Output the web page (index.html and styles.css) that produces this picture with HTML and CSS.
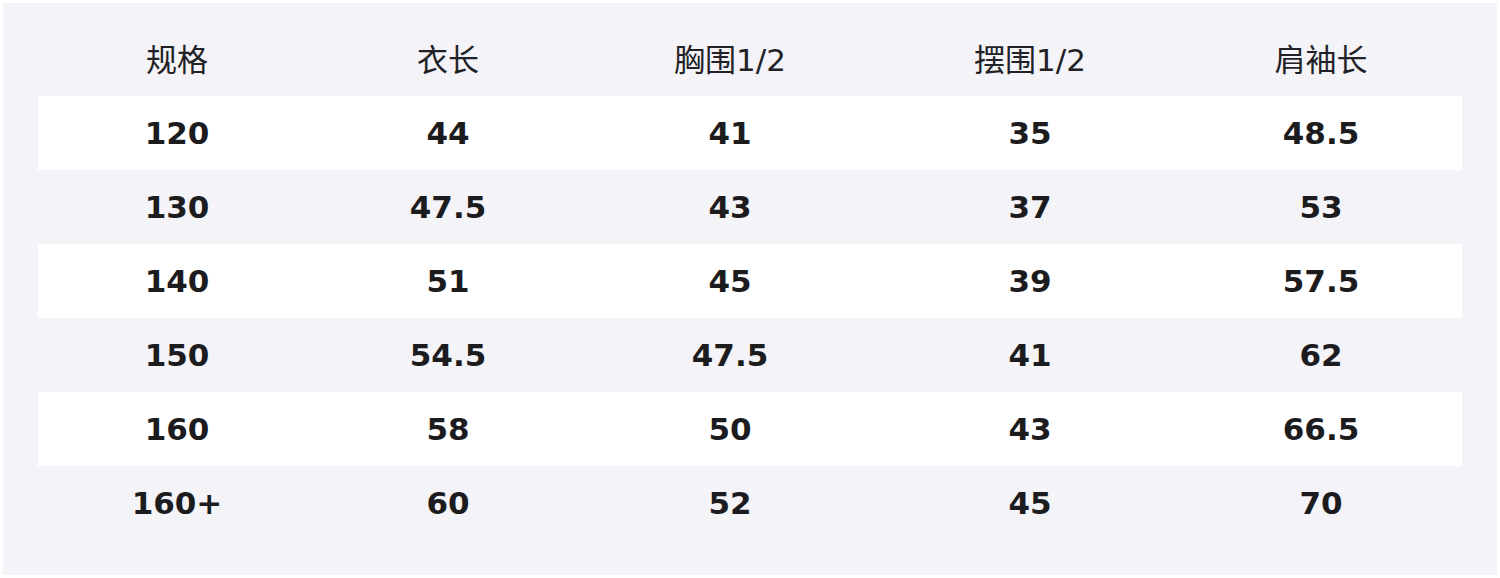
FILE: index.html
```html
<!DOCTYPE html>
<html lang="zh">
<head>
<meta charset="utf-8">
<link rel="stylesheet" href="styles.css">
</head>
<body>
<div class="panel">
  <div class="table">
    <div class="row head"><div>规格</div><div>衣长</div><div>胸围1/2</div><div>摆围1/2</div><div>肩袖长</div></div>
    <div class="row alt"><div>120</div><div>44</div><div>41</div><div>35</div><div>48.5</div></div>
    <div class="row"><div>130</div><div>47.5</div><div>43</div><div>37</div><div>53</div></div>
    <div class="row alt"><div>140</div><div>51</div><div>45</div><div>39</div><div>57.5</div></div>
    <div class="row"><div>150</div><div>54.5</div><div>47.5</div><div>41</div><div>62</div></div>
    <div class="row alt"><div>160</div><div>58</div><div>50</div><div>43</div><div>66.5</div></div>
    <div class="row"><div>160+</div><div>60</div><div>52</div><div>45</div><div>70</div></div>
  </div>
</div>
</body>
</html>
```
FILE: styles.css
```css
html, body {
  margin: 0;
  padding: 0;
  background: #ffffff;
}
body {
  padding: 3px;
  width: 1494px;
  height: 572px;
}
.panel {
  background: #f3f3f8;
  height: 100%;
  padding: 19px 35px 0 35px;
  box-sizing: border-box;
  font-family: "DejaVu Sans", "Noto Sans CJK SC", sans-serif;
  color: #1c1c1f;
}
.row {
  display: grid;
  grid-template-columns: 278px 264px 300px 300px 282px;
  height: 74px;
  align-items: center;
  text-align: center;
  font-size: 31px;
  font-weight: bold;
}
.row.head {
  font-weight: normal;
  color: #222226;
  height: 74px;
}
.row.head > div {
  margin-top: -4px;
}
.row.alt {
  background: #ffffff;
}
```
